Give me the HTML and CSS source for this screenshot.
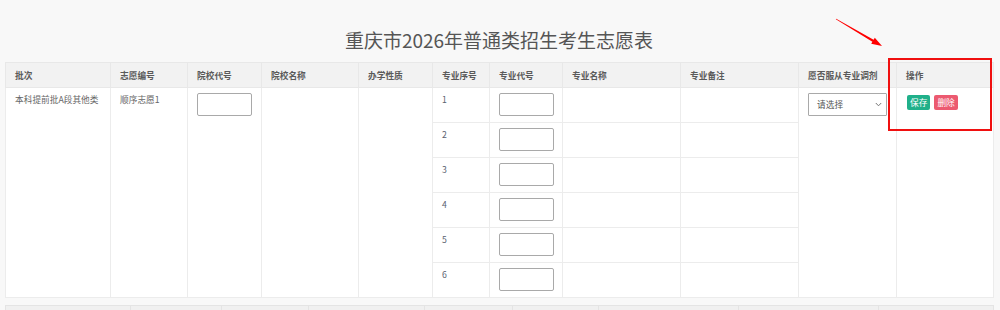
FILE: index.html
```html
<!DOCTYPE html>
<html lang="zh-CN">
<head>
<meta charset="utf-8">
<title>重庆市2026年普通类招生考生志愿表</title>
<link rel="stylesheet" href="styles.css">
</head>
<body>
<div class="page">
  <h1 class="title">重庆市2026年普通类招生考生志愿表</h1>
  <table class="wish">
    <colgroup>
      <col style="width:105px"><col style="width:77px"><col style="width:74px"><col style="width:97px"><col style="width:74px"><col style="width:57px"><col style="width:73px"><col style="width:118px"><col style="width:118px"><col style="width:98px"><col style="width:97px">
    </colgroup>
    <thead>
      <tr>
        <th>批次</th><th>志愿编号</th><th>院校代号</th><th>院校名称</th><th>办学性质</th><th>专业序号</th><th>专业代号</th><th>专业名称</th><th>专业备注</th><th>愿否服从专业调剂</th><th>操作</th>
      </tr>
    </thead>
    <tbody>
      <tr>
        <td rowspan="6">本科提前批A段其他类</td>
        <td rowspan="6">顺序志愿1</td>
        <td rowspan="6" class="ctl"><input class="box" type="text"></td>
        <td rowspan="6"></td>
        <td rowspan="6"></td>
        <td class="num">1</td>
        <td class="ctl"><input class="box" type="text"></td>
        <td></td><td></td>
        <td rowspan="6" class="ctl">
          <div class="select"><span>请选择</span><svg class="chev" width="7" height="5" viewBox="0 0 7 5"><path d="M0.8 1 L3.5 3.8 L6.2 1" fill="none" stroke="#777" stroke-width="1"/></svg></div>
        </td>
        <td rowspan="6" class="ops"><div class="btns"><span class="btn save">保存</span><span class="btn del">删除</span></div></td>
      </tr>
      <tr><td class="num">2</td><td class="ctl"><input class="box" type="text"></td><td></td><td></td></tr>
      <tr><td class="num">3</td><td class="ctl"><input class="box" type="text"></td><td></td><td></td></tr>
      <tr><td class="num">4</td><td class="ctl"><input class="box" type="text"></td><td></td><td></td></tr>
      <tr><td class="num">5</td><td class="ctl"><input class="box" type="text"></td><td></td><td></td></tr>
      <tr><td class="num">6</td><td class="ctl"><input class="box" type="text"></td><td></td><td></td></tr>
    </tbody>
  </table>
  <table class="next">
    <colgroup>
      <col style="width:125px"><col style="width:91px"><col style="width:87px"><col style="width:116px"><col style="width:88px"><col style="width:86px"><col style="width:140px"><col style="width:140px"><col style="width:115px">
    </colgroup>
    <thead><tr><th></th><th></th><th></th><th></th><th></th><th></th><th></th><th></th><th></th></tr></thead>
  </table>
  <div class="mark"></div>
  <svg class="arrow" width="60" height="40" viewBox="830 15 60 40">
    <polygon points="835.8,19.3 836.2,18.7 873.6,39.7 874.8,37.7 882,46 871.2,43.7 872.4,41.7" fill="#ff0000"/>
  </svg>
</div>
</body>
</html>
```

FILE: styles.css
```css
html, body {
  margin: 0;
  padding: 0;
  background: #f8f8f8;
}
body {
  font-family: "Noto Sans CJK SC", "Liberation Sans", sans-serif;
  color: #666;
}
.page {
  position: relative;
  height: 310px;
  overflow: hidden;
  padding: 0 7px 0 5px;
}
.title {
  margin: 0;
  padding-top: 27px;
  height: 35px;
  box-sizing: content-box;
  font-size: 19px;
  line-height: 26px;
  font-weight: normal;
  color: #555;
  text-align: center;
}
.wish, .next {
  border-collapse: collapse;
  table-layout: fixed;
  width: 988px;
  background: #fff;
}
.wish th, .next th {
  background: #f2f2f2;
  height: 25px;
  padding: 0 9px;
  box-sizing: border-box;
  text-align: left;
  font-size: 8.7px;
  font-weight: bold;
  color: #5a5a5a;
  border: 1px solid #e8e8e8;
  white-space: nowrap;
  overflow: hidden;
}
.wish td {
  height: 35px;
  box-sizing: border-box;
  padding: 6px 9px;
  vertical-align: top;
  font-size: 8.7px;
  line-height: 12px;
  color: #666;
  border: 1px solid #ececec;
  white-space: nowrap;
}
.wish td.num {
  color: #5a6270;
}
.wish td.ctl {
  padding: 5px 9px 0 9px;
}
.box {
  display: block;
  width: 55px;
  height: 23px;
  box-sizing: border-box;
  margin: 0;
  padding: 0;
  border: 1px solid #a9a9a9;
  border-radius: 2px;
  background: #fff;
}
.select {
  width: 79px;
  height: 23px;
  box-sizing: border-box;
  border: 1px solid #a9a9a9;
  border-radius: 1px;
  background: #fff;
  display: flex;
  align-items: center;
  justify-content: space-between;
  padding: 0 4px 0 8px;
  font-size: 8.7px;
  color: #555;
}
.chev { display: block; }
.wish td.ops {
  padding: 7px 9px 0 10px;
}
.btns {
  display: flex;
  gap: 4px;
}
.btn {
  display: block;
  height: 15px;
  line-height: 15px;
  padding: 0 3px;
  font-size: 8.7px;
  color: #fff;
  border-radius: 2px;
}
.btn.save { background: #20b08a; }
.btn.del { background: #ec5a70; }
.next {
  margin-top: 7px;
}
.next th {
  background: #f0f0f0;
  border-color: #e4e4e4;
}
.mark {
  position: absolute;
  left: 888px;
  top: 58px;
  width: 104px;
  height: 73px;
  box-sizing: border-box;
  border: 2px solid #f01010;
}
.arrow {
  position: absolute;
  left: 830px;
  top: 15px;
}
```
